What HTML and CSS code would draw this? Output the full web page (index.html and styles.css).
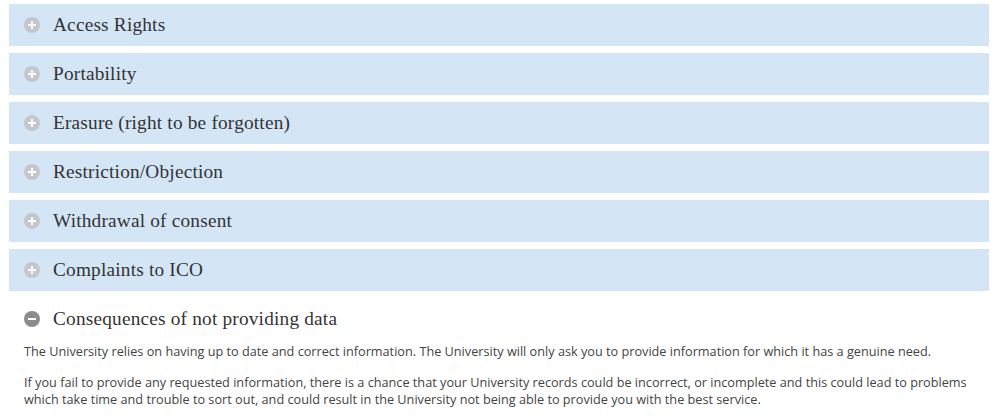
FILE: index.html
```html
<!DOCTYPE html>
<html lang="en">
<head>
    <meta charset="UTF-8">
    <meta name="viewport" content="width=device-width, initial-scale=1.0">
    <title>Your rights</title>
    <link rel="stylesheet" href="styles.css">
</head>
<body>
    <div class="accordion">
        <div class="acc-item">
            <div class="acc-head"><span class="acc-icon plus"></span>Access Rights</div>
        </div>
        <div class="acc-item">
            <div class="acc-head"><span class="acc-icon plus"></span>Portability</div>
        </div>
        <div class="acc-item">
            <div class="acc-head"><span class="acc-icon plus"></span>Erasure (right to be forgotten)</div>
        </div>
        <div class="acc-item">
            <div class="acc-head"><span class="acc-icon plus"></span>Restriction/Objection</div>
        </div>
        <div class="acc-item">
            <div class="acc-head"><span class="acc-icon plus"></span>Withdrawal of consent</div>
        </div>
        <div class="acc-item">
            <div class="acc-head"><span class="acc-icon plus"></span>Complaints to ICO</div>
        </div>
        <div class="acc-item open">
            <div class="acc-head"><span class="acc-icon minus"></span>Consequences of not providing data</div>
            <div class="acc-body">
                <p>The University relies on having up to date and correct information. The University will only ask you to provide information for which it has a genuine need.</p>
                <p>If you fail to provide any requested information, there is a chance that your University records could be incorrect, or incomplete and this could lead to problems which take time and trouble to sort out, and could result in the University not being able to provide you with the best service.</p>
            </div>
        </div>
    </div>
</body>
</html>
```

FILE: styles.css
```css
body {
    margin: 0;
    background-color: #fff;
    font-family: "Open Sans", Arial, sans-serif;
}
.accordion {
    padding: 4px 11px 0 9px;
    display: flex;
    flex-direction: column;
    gap: 7px;
}
.acc-head {
    height: 42px;
    display: flex;
    align-items: center;
    background-color: #d4e5f5;
    font-family: "Liberation Serif", "Times New Roman", serif;
    font-size: 19.3px;
    letter-spacing: 0.2px;
    color: #333;
    padding-left: 15px;
}
.acc-item.open .acc-head {
    background-color: transparent;
}
.acc-icon {
    position: relative;
    width: 16px;
    height: 16px;
    border-radius: 50%;
    background-color: #c3c7cb;
    margin-right: 13px;
    flex-shrink: 0;
}
.acc-icon.minus {
    background-color: #8c8c8c;
}
.acc-icon::before,
.acc-icon::after {
    content: "";
    position: absolute;
    background-color: #fff;
    left: 4px;
    top: 7px;
    width: 8px;
    height: 2px;
}
.acc-icon.plus::after {
    left: 7px;
    top: 4px;
    width: 2px;
    height: 8px;
}
.acc-icon.minus::after {
    display: none;
}
.acc-body {
    padding: 3px 0 0 15px;
    font-size: 12.7px;
    line-height: 17px;
    color: #444;
}
.acc-body p {
    margin: 0 0 14px;
}
```
